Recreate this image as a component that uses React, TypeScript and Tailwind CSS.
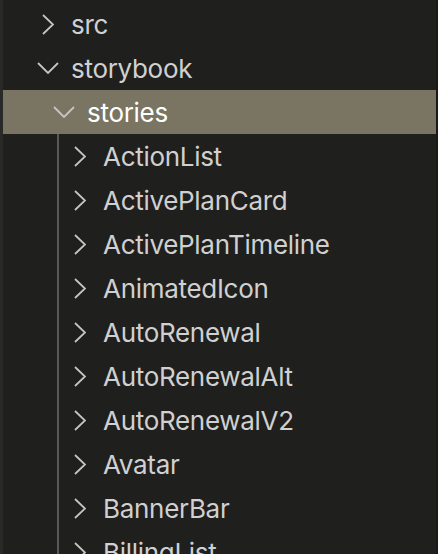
import React from 'react'

type Item = { name: string; open?: boolean }

const children: Item[] = [
  { name: 'ActionList' },
  { name: 'ActivePlanCard' },
  { name: 'ActivePlanTimeline' },
  { name: 'AnimatedIcon' },
  { name: 'AutoRenewal' },
  { name: 'AutoRenewalAlt' },
  { name: 'AutoRenewalV2' },
  { name: 'Avatar' },
  { name: 'BannerBar' },
  { name: 'BillingList' },
]

function Chevron({ open }: { open?: boolean }) {
  // twistie, 32px box like the codicon at 2x
  return (
    <span className="flex w-[32px] h-[44px] shrink-0 items-center justify-center">
      {open ? (
        <svg width="22" height="12" viewBox="0 0 22 12" fill="none">
          <path d="M1 1 L11 11 L21 1" stroke="#c5c5c5" strokeWidth="1.8" />
        </svg>
      ) : (
        <svg width="12" height="21" viewBox="0 0 12 21" fill="none">
          <path d="M1 1 L11 10.5 L1 20" stroke="#c5c5c5" strokeWidth="1.8" />
        </svg>
      )}
    </span>
  )
}

function Row({ item, selected, pad }: { item: Item; selected?: boolean; pad: string }) {
  return (
    <div className={`flex h-[44px] items-center ${pad} ${selected ? 'bg-[#7a7562]' : ''}`}>
      <Chevron open={item.open} />
      <span
        className={`ml-[7px] pt-[2px] text-[26px] leading-none tracking-[-0.3px] whitespace-nowrap ${
          selected ? 'text-white' : 'text-[#d0d0d0]'
        }`}
      >
        {item.name}
      </span>
    </div>
  )
}

export default function App() {
  return (
    <div
      className="flex h-[554px] w-[438px] overflow-hidden bg-[#1f1f1e]"
      style={{ fontFamily: 'Inter, "Noto Sans", sans-serif' }}
    >
      <div className="w-[3px] shrink-0 bg-[#292927]" />
      <div className="flex-1 pt-[2px]">
        <Row item={{ name: 'src' }} pad="pl-[29px]" />
        <Row item={{ name: 'storybook', open: true }} pad="pl-[29px]" />
        <Row item={{ name: 'stories', open: true }} selected pad="pl-[45px]" />
        <div className="ml-[54px] border-l-2 border-[#585858]">
          {children.map((c) => (
            <Row key={c.name} item={c} pad="pl-[5px]" />
          ))}
        </div>
      </div>
      <div className="w-[2px] shrink-0 bg-[#1a1a19]" />
    </div>
  )
}
